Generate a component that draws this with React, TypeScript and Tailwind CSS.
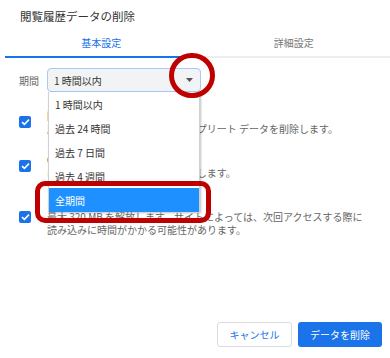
import React from "react";

const Check = () => (
  <div className="w-[12px] h-[12px] rounded-[2px] bg-[#1a73e8] flex items-center justify-center shrink-0">
    <svg width="9" height="8" viewBox="0 0 9 8">
      <path d="M1 4.2 L3.4 6.4 L8 1.6" stroke="white" strokeWidth="1.6" fill="none" />
    </svg>
  </div>
);

export default function App() {
  const items = ["1 時間以内", "過去 24 時間", "過去 7 日間", "過去 4 週間", "全期間"];
  return (
    <div className="relative w-[390px] h-[358px] bg-white overflow-hidden flex flex-col font-['Noto_Sans_CJK_JP',sans-serif]">
      <div className="pt-[9px] pl-[20px] text-[11.5px] leading-[14px] text-[#333]">閲覧履歴データの削除</div>

      <div className="mt-[5px] ml-[5px] flex border-b-2 border-[#eeeeee]">
        <div className="flex-1 h-[30px] -mb-[2px] border-b-2 border-[#1a73e8] flex items-center justify-center text-[10px] text-[#1a73e8]">
          基本設定
        </div>
        <div className="flex-1 h-[30px] -mb-[2px] border-b-2 border-transparent flex items-center justify-center text-[10px] text-[#777]">
          詳細設定
        </div>
      </div>

      <div className="mt-[10px] pl-[19px] flex items-center">
        <div className="w-[28px] text-[10px] text-[#666]">期間</div>
        <div className="relative w-[154px] h-[24px]">
          <div className="w-full h-full rounded-[4px] border border-[#a8c7fa] bg-[#f1f3f4] flex items-center justify-between pl-[6px] pr-[7px] text-[10px] text-[#333]">
            <span>1 時間以内</span>
            <svg width="7" height="4" viewBox="0 0 7 4">
              <path d="M0 0 L7 0 L3.5 4 Z" fill="#555" />
            </svg>
          </div>
          <div className="absolute left-[1px] top-[24px] w-[152px] bg-white border-x border-[#d0d0d0] shadow-[1px_1px_2px_rgba(0,0,0,0.25)] z-10">
            {items.map((t, i) => (
              <div
                key={t}
                className={
                  i === items.length - 1
                    ? "h-[24px] flex items-center pl-[6px] text-[10px] bg-[#1e90ff] text-white"
                    : "h-[24px] flex items-center pl-[6px] text-[10px] text-[#333]"
                }
              >
                {t}
              </div>
            ))}
          </div>
        </div>
      </div>

      <div className="mt-[17px] flex flex-col gap-[18px] pl-[19px]">
        <div className="flex items-center">
          <Check />
          <div className="ml-[16px] w-[330px] text-[10px] leading-[13px]">
            <div className="text-[#333]">閲覧履歴</div>
            <div className="text-[#666]">履歴とアドレスバーのオートコンプリート データを削除します。</div>
          </div>
        </div>
        <div className="flex items-center">
          <Check />
          <div className="ml-[16px] w-[330px] text-[10px] leading-[13px]">
            <div className="text-[#333]">Cookie と他のサイトデータ</div>
            <div className="text-[#666]">ほとんどのサイトからログアウトします。</div>
          </div>
        </div>
        <div className="flex items-center">
          <Check />
          <div className="ml-[16px] w-[330px] text-[10px] leading-[13px]">
            <div className="text-[#333]">キャッシュされた画像とファイル</div>
            <div className="text-[#666]">
              最大 320 MB を解放します。サイトによっては、次回アクセスする際に
              <br />
              読み込みに時間がかかる可能性があります。
            </div>
          </div>
        </div>
      </div>

      <div className="mt-auto mb-[11px] mr-[8px] flex justify-end gap-[6px]">
        <button className="w-[75px] h-[25px] rounded-[3px] border border-[#dadce0] bg-white text-[10px] text-[#1a73e8]">
          キャンセル
        </button>
        <button className="w-[84px] h-[25px] rounded-[3px] bg-[#1a73e8] text-[10px] text-white">
          データを削除
        </button>
      </div>

      <div className="absolute left-[169px] top-[53px] w-[46px] h-[45px] rounded-full border-[5px] border-[#bf0000] z-20" />
      <div className="absolute left-[35px] top-[181px] w-[176px] h-[42px] rounded-[10px] border-[5px] border-[#bf0000] z-20" />
    </div>
  );
}
